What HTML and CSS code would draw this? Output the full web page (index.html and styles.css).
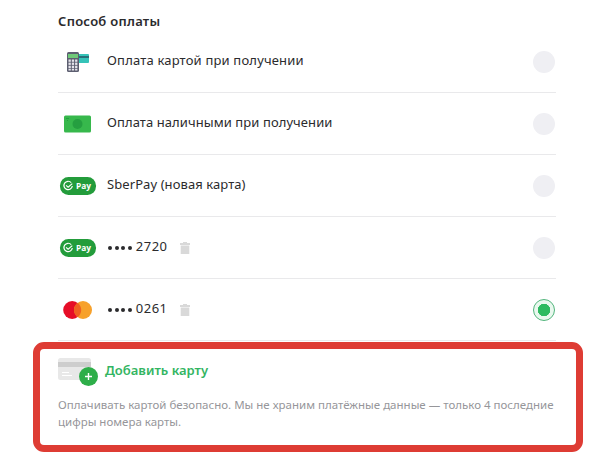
FILE: index.html
```html
<!DOCTYPE html>
<html lang="ru">
<head>
	<meta charset="UTF-8">
	<meta name="viewport" content="width=device-width, initial-scale=1.0">
	<title>Способ оплаты</title>
	<link rel="stylesheet" href="styles.css">
</head>
<body>
	<div class="payment">
		<h2 class="title">Способ оплаты</h2>
		<div class="row">
			<div class="icon">
				<svg width="40" height="24" viewBox="0 0 40 24">
					<rect x="20" y="4" width="11" height="9" rx="1" fill="#35c3b8"/>
					<rect x="20" y="6" width="11" height="2" fill="#286f78"/>
					<rect x="9" y="2" width="12" height="20" rx="1.5" fill="#5c5e70"/>
					<rect x="10" y="4" width="10" height="4" fill="#6fc878"/>
					<g fill="#e6e5ec">
						<rect x="10.5" y="9.5" width="2.3" height="2.3"/><rect x="13.8" y="9.5" width="2.3" height="2.3"/><rect x="17.1" y="9.5" width="2.3" height="2.3"/>
						<rect x="10.5" y="12.6" width="2.3" height="2.3"/><rect x="13.8" y="12.6" width="2.3" height="2.3"/><rect x="17.1" y="12.6" width="2.3" height="2.3"/>
						<rect x="10.5" y="15.7" width="2.3" height="2.3"/><rect x="13.8" y="15.7" width="2.3" height="2.3"/><rect x="17.1" y="15.7" width="2.3" height="2.3"/>
						<rect x="10.5" y="18.7" width="2.3" height="1.8"/><rect x="13.8" y="18.7" width="2.3" height="1.8"/><rect x="17.1" y="18.7" width="2.3" height="1.8"/>
					</g>
				</svg>
			</div>
			<span class="name card">Оплата картой при получении</span>
			<span class="radio"></span>
		</div>
		<div class="row">
			<div class="icon">
				<svg width="40" height="24" viewBox="0 0 40 24">
					<rect x="6" y="3.5" width="27" height="17" rx="1.5" fill="#37b84c"/>
					<circle cx="19.5" cy="12" r="5" fill="#259f40"/>
					<path d="M8 6.5h3M9 8.5h1" stroke="#259f40"/>
				</svg>
			</div>
			<span class="name">Оплата наличными при получении</span>
			<span class="radio"></span>
		</div>
		<div class="row">
			<div class="icon">
				<svg width="40" height="24" viewBox="0 0 40 24">
					<rect x="2" y="3" width="36" height="18" rx="8.5" fill="#239c3b"/>
					<path d="M13.2 8.6A4.2 4.2 0 1 0 14.3 12M8.1 11.4l2 1.8 4.2-3.6" fill="none" stroke="#fff" stroke-width="1.2"/>
					<text class="pay" x="18" y="15" textLength="15" lengthAdjust="spacingAndGlyphs">Pay</text>
				</svg>
			</div>
			<span class="name">SberPay (новая карта)</span>
			<span class="radio"></span>
		</div>
		<div class="row">
			<div class="icon">
				<svg width="40" height="24" viewBox="0 0 40 24">
					<rect x="2" y="3" width="36" height="18" rx="8.5" fill="#239c3b"/>
					<path d="M13.2 8.6A4.2 4.2 0 1 0 14.3 12M8.1 11.4l2 1.8 4.2-3.6" fill="none" stroke="#fff" stroke-width="1.2"/>
					<text class="pay" x="18" y="15" textLength="15" lengthAdjust="spacingAndGlyphs">Pay</text>
				</svg>
			</div>
			<span class="dots"><i></i><i></i><i></i><i></i></span>
			<span class="number">2720</span>
			<svg class="trash" width="10" height="12" viewBox="0 0 10 12"><path d="M0 1h3V0h4v1h3v2H0zM.7 3.6h8.6V12H.7z" fill="#d9d9d9"/></svg>
			<span class="radio"></span>
		</div>
		<div class="row">
			<div class="icon">
				<svg width="40" height="24" viewBox="0 0 40 24">
					<circle cx="14.2" cy="12" r="9" fill="#e60d27"/>
					<circle cx="25" cy="12" r="9" fill="#f7a12b"/>
					<path d="M19.6 4.8a9 9 0 0 1 0 14.4a9 9 0 0 1 0-14.4" fill="#f06020"/>
				</svg>
			</div>
			<span class="dots"><i></i><i></i><i></i><i></i></span>
			<span class="number">0261</span>
			<svg class="trash" width="10" height="12" viewBox="0 0 10 12"><path d="M0 1h3V0h4v1h3v2H0zM.7 3.6h8.6V12H.7z" fill="#d9d9d9"/></svg>
			<span class="radio checked"></span>
		</div>
	</div>
	<div class="add">
		<div class="addHead">
			<svg width="41" height="30" viewBox="0 0 41 30">
				<rect x="0" y="2" width="33" height="22" rx="2.5" fill="#e8e8e8"/>
				<rect x="0" y="6" width="33" height="5" fill="#cdcdcd"/>
				<path d="M4 16.5h7M4 19.5h10" stroke="#fff"/>
				<circle cx="30.5" cy="20.5" r="9.5" fill="#2eae49"/>
				<path d="M27 20.5h7M30.5 17v7" stroke="#fff" stroke-width="1.4"/>
			</svg>
			<span class="addLink">Добавить карту</span>
		</div>
		<div class="note">Оплачивать картой безопасно. Мы не храним платёжные данные — только 4 последние<br>цифры номера карты.</div>
	</div>
</body>
</html>
```

FILE: styles.css
```css
body {
	margin: 0;
	background: #fff;
	color: #2b2b2d;
	font-family: "Noto Sans", "Open Sans", sans-serif;
}
.payment {
	width: 498px;
	padding: 12px 0 0 58px;
}
.title {
	margin: 0;
	height: 19px;
	font-size: 13px;
	line-height: 19px;
	font-weight: 600;
	letter-spacing: 0.27px;
}
.row {
	display: flex;
	align-items: center;
	height: 61px;
	border-bottom: 1px solid #e9e9eb;
}
.icon {
	width: 49px;
	height: 24px;
}
.name, .number {
	margin-bottom: 3px;
	font-size: 13px;
	line-height: 20px;
	letter-spacing: 0.08px;
	white-space: nowrap;
}
.card {
	letter-spacing: 0.18px;
}
.number {
	letter-spacing: 0.5px;
}
.pay {
	font: bold 9px "Open Sans", sans-serif;
	fill: #fff;
}
.dots {
	display: flex;
	gap: 2.6px;
	margin: 0 4px 0 1px;
}
.dots i {
	width: 4px;
	height: 4px;
	border-radius: 50%;
	background: #2b2b2d;
}
.trash {
	margin-left: 12px;
}
.radio {
	box-sizing: border-box;
	width: 22px;
	height: 22px;
	margin: 0 1px 0 auto;
	border-radius: 50%;
	background: #efeff3;
}
.checked {
	border: 1.5px solid #52b57c;
	background: radial-gradient(circle, #2dba60 6px, #e9f8ee 6.5px);
}
.add {
	box-sizing: border-box;
	width: 550px;
	height: 110px;
	margin: 1px 0 0 33px;
	padding: 7px 0 0 18px;
	border: 7px solid #de3c34;
	border-radius: 11px;
}
.addHead {
	display: flex;
	align-items: center;
	gap: 6px;
	height: 30px;
}
.addLink {
	margin-bottom: 2px;
	color: #33b562;
	font-size: 13px;
	line-height: 20px;
	font-weight: 600;
}
.note {
	margin-top: 10px;
	color: #96969a;
	font-size: 11.5px;
	line-height: 17px;
	white-space: nowrap;
}
```
